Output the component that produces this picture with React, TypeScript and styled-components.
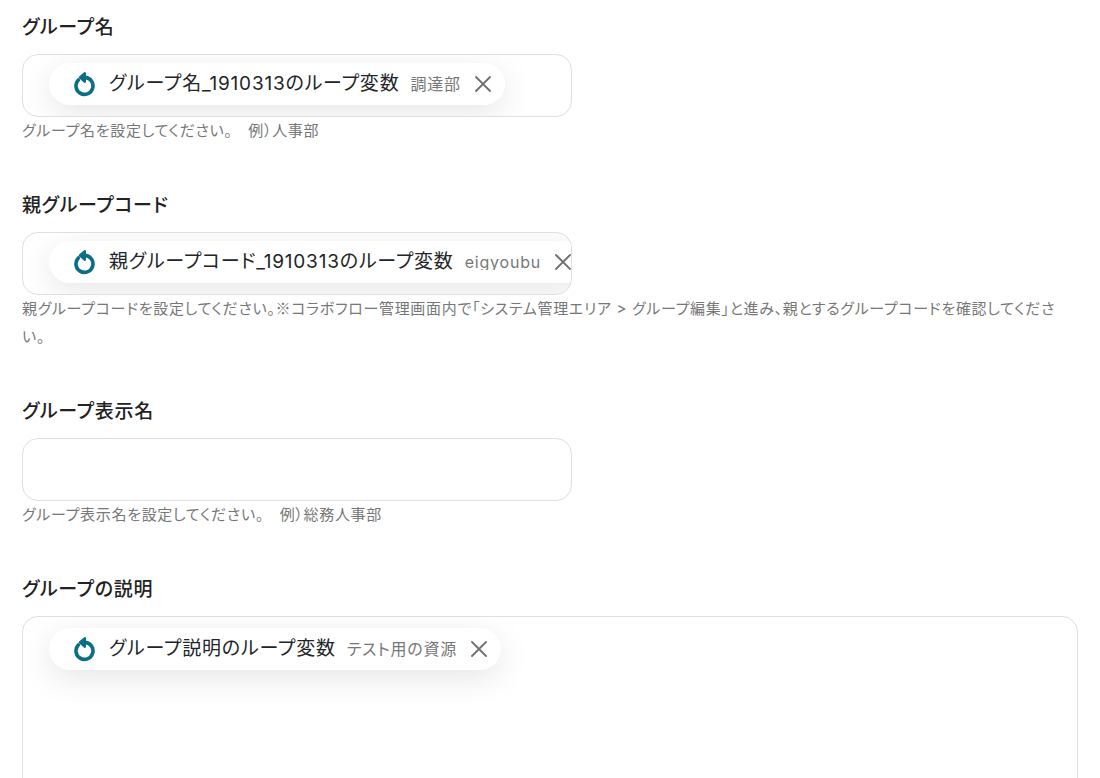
import React from "react";
import styled, { createGlobalStyle } from "styled-components";

const GlobalStyle = createGlobalStyle`
  *, *::before, *::after { box-sizing: border-box; }
  body {
    margin: 0;
    background: #fff;
    color: #222;
    font-family: Inter, "Noto Sans CJK JP", sans-serif;
    font-feature-settings: "palt";
    letter-spacing: 0.043em;
  }
`;

const Form = styled.form`
  display: flex;
  flex-direction: column;
  gap: 47px;
  padding: 14px 22px 46px;
`;

const Field = styled.div`
  display: flex;
  flex-direction: column;
`;

const FieldLabel = styled.label`
  margin-bottom: 12px;
  font-size: 19px;
  font-weight: 500;
  line-height: 28px;
`;

const Box = styled.div<{ $multiline?: boolean }>`
  display: flex;
  flex-direction: ${(p) => (p.$multiline ? "column" : "row")};
  align-items: flex-start;
  width: 100%;
  max-width: ${(p) => (p.$multiline ? "none" : "550px")};
  min-height: ${(p) => (p.$multiline ? "240px" : "63px")};
  padding: ${(p) => (p.$multiline ? "11px 26px" : "8px 26px")};
  border: 1px solid #dedfe3;
  border-radius: 16px;
  background: #fff;
  overflow: hidden;
`;

const TextInput = styled.input`
  flex: 1 1 0;
  min-width: 0;
  height: 42px;
  padding: 0;
  border: 0;
  outline: 0;
  background: transparent;
  font: inherit;
`;

const TextArea = styled.textarea`
  flex: 1;
  width: 100%;
  padding: 0;
  border: 0;
  outline: 0;
  resize: none;
  background: transparent;
  font: inherit;
`;

const Chip = styled.span`
  display: flex;
  flex: none;
  align-items: center;
  height: 42px;
  padding: 0 14px 0 24px;
  border-radius: 21px;
  background: #fff;
  box-shadow: 0 8px 32px rgba(0, 0, 0, 0.1);
  letter-spacing: 0.05em;
  white-space: nowrap;
`;

const ChipName = styled.span`
  margin: 0 11px 0 13px;
  color: #212529;
  font-size: 19px;
  line-height: 28px;
`;

const ChipValue = styled.span`
  margin-right: 14px;
  color: #777;
  font-size: 16px;
  line-height: 16px;
  overflow: hidden;
`;

const RemoveButton = styled.button`
  display: flex;
  padding: 0;
  border: 0;
  background: none;
  color: #707070;
  cursor: pointer;
`;

const Help = styled.p`
  margin: 0;
  padding-right: 8px;
  color: #777;
  font-size: 15px;
  line-height: 28px;
`;

const NoteMark = styled.span`
  font-family: "Noto Sans CJK JP", sans-serif;
  line-height: 16px;
`;

const LoopIcon = () => (
  <svg width="23" height="26" viewBox="0 1 23 26" fill="none" aria-hidden="true">
    <path
      d="M5.3 10A8.5 8.5 0 1 0 12.4 7.4"
      stroke="#0b6e87"
      strokeWidth="3.6"
      strokeLinecap="round"
    />
    <path
      d="M6.8 7.4 11.9 3.2V11.8Z"
      fill="#0b6e87"
      stroke="#0b6e87"
      strokeWidth="2.2"
      strokeLinejoin="round"
    />
  </svg>
);

const CloseIcon = () => (
  <svg width="16" height="16" viewBox="0 0 16 16" aria-hidden="true">
    <path d="M1 1 15 15M15 1 1 15" stroke="currentColor" strokeWidth="1.8" strokeLinecap="round" />
  </svg>
);

type FieldData = {
  id: string;
  label: string;
  chip?: { name: string; value: string };
  help?: React.ReactNode;
  multiline?: boolean;
};

const fields: FieldData[] = [
  {
    id: "group-name",
    label: "グループ名",
    chip: { name: "グループ名_1910313のループ変数", value: "調達部" },
    help: "グループ名を設定してください。　例）人事部",
  },
  {
    id: "parent-code",
    label: "親グループコード",
    chip: { name: "親グループコード_1910313のループ変数", value: "eigyoubu" },
    help: (
      <>
        親グループコードを設定してください。<NoteMark>※</NoteMark>
        コラボフロー管理画面内で「システム管理エリア &gt; グループ編集」と進み、親とするグループコードを確認してください。
      </>
    ),
  },
  {
    id: "display-name",
    label: "グループ表示名",
    help: "グループ表示名を設定してください。　例）総務人事部",
  },
  {
    id: "description",
    label: "グループの説明",
    chip: { name: "グループ説明のループ変数", value: "テスト用の資源" },
    multiline: true,
  },
];

export default function App() {
  return (
    <>
      <GlobalStyle />
      <Form>
        {fields.map((f) => (
          <Field key={f.id}>
            <FieldLabel htmlFor={f.id}>{f.label}</FieldLabel>
            <Box $multiline={f.multiline}>
              {f.chip && (
                <Chip>
                  <LoopIcon />
                  <ChipName>{f.chip.name}</ChipName>
                  <ChipValue>{f.chip.value}</ChipValue>
                  <RemoveButton type="button" aria-label="削除">
                    <CloseIcon />
                  </RemoveButton>
                </Chip>
              )}
              {f.multiline ? <TextArea id={f.id} /> : <TextInput id={f.id} type="text" />}
            </Box>
            {f.help && <Help>{f.help}</Help>}
          </Field>
        ))}
      </Form>
    </>
  );
}
